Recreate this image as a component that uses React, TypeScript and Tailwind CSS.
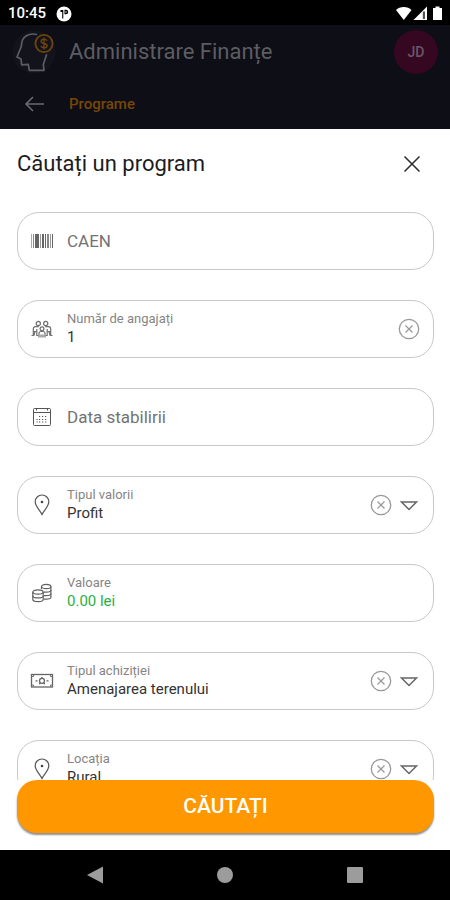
import { useState, type ReactNode } from "react";

function BarcodeIcon() {
  return (
    <svg width="24" height="16" viewBox="0 0 24 16" fill="#666" aria-hidden="true">
      <rect x="1" y="1" width="1" height="14" fill="#aaa" />
      <rect x="3" y="1" width="1" height="14" fill="#888" />
      <rect x="5" y="1" width="4" height="14" />
      <rect x="10" y="1" width="1" height="14" fill="#999" />
      <rect x="12" y="1" width="2" height="14" />
      <rect x="15" y="1" width="1" height="14" />
      <rect x="17" y="1" width="2" height="14" fill="#888" />
      <rect x="20" y="1" width="1" height="14" fill="#999" />
      <rect x="22" y="1" width="1" height="14" />
    </svg>
  );
}

function PeopleIcon() {
  return (
    <svg width="24" height="20" viewBox="0 0 24 20" fill="none" stroke="#707070" strokeWidth="1.200" aria-hidden="true">
      <circle cx="8.300" cy="4.500" r="2.100" />
      <circle cx="15.700" cy="4.500" r="2.100" />
      <circle cx="12" cy="9.800" r="1.900" />
      <path d="M1.500 16.500h1.800V9.800c0-1.400.8-2.200 2.200-2.200h3.300M3.300 12.500h3.500V10M6.800 12.500v4h1.500M5 12.500l-1 4" />
      <path d="M22.500 16.500h-1.800V9.800c0-1.400-.8-2.200-2.200-2.200h-3.300M20.700 12.500h-3.500V10M17.200 12.500v4h-1.500M19 12.500l1 4" />
      <path d="M9 18.500v-4c0-1.200.8-2 2-2h2c1.200 0 2 .8 2 2v4M11 15.500v3M13 15.500v3" />
    </svg>
  );
}

function CalendarIcon() {
  return (
    <svg width="20" height="20" viewBox="0 0 20 20" fill="none" stroke="#555" aria-hidden="true">
      <rect x="1.500" y="1.500" width="17" height="17" rx="1" />
      <path d="M1.500 5.500h17M4.500 1v2.500M15.500 1v2.500" />
      <path d="M7 9.500h1.200M10 9.500h1.200M13 9.500h1.200M4.500 12.500h1.200M7 12.500h1.200M10 12.500h1.200M13 12.500h1.200M4.500 15h1.200M7 15h1.200M10 15h1.200M13 15h1.200" />
    </svg>
  );
}

function PinIcon() {
  return (
    <svg width="16" height="22" viewBox="0 0 16 22" fill="none" stroke="#555" strokeWidth="1.200" aria-hidden="true">
      <path d="M8 20.500C6.500 17 1.200 12.500 1.200 7.800a6.800 6.800 0 0 1 13.600 0C14.800 12.500 9.500 17 8 20.500z" />
      <circle cx="8" cy="8" r="1.300" fill="#444" stroke="none" />
    </svg>
  );
}

function CoinsIcon() {
  return (
    <svg width="20" height="20" viewBox="0 0 20 20" fill="none" stroke="#606060" strokeWidth="1.200" aria-hidden="true">
      <path d="M9.500 6V3.500c0-1.200 2-2.200 4.700-2.200s4.700 1 4.700 2.200V14c0 1.200-2 2.200-4.700 2.200H12" />
      <path d="M9.500 3.500c0 1.200 2 2.200 4.700 2.200s4.700-1 4.700-2.200M18.900 7c0 1.200-2 2.200-4.700 2.200H12M18.900 10.500c0 1.200-2 2.200-4.700 2.200H12" />
      <path d="M.8 9c0-1.200 2-2.200 5.200-2.200s5.200 1 5.200 2.200v7.500c0 1.200-2 2.200-5.200 2.200s-5.200-1-5.200-2.200z" />
      <path d="M.8 9c0 1.200 2 2.200 5.200 2.200s5.200-1 5.200-2.200M.8 12.700c0 1.200 2 2.200 5.200 2.200s5.200-1 5.200-2.200" />
    </svg>
  );
}

function BanknoteIcon() {
  return (
    <svg width="24" height="16" viewBox="0 0 24 16" fill="none" stroke="#666" strokeWidth="1.300" aria-hidden="true">
      <rect x="1.500" y="1.500" width="21" height="12.500" />
      <path d="M3.500 2v1.500H2M20.500 2v1.500H22M3.500 13.500V12H2M20.500 13.500V12H22" strokeWidth="0.900" />
      <circle cx="12" cy="7.800" r="2.500" />
      <path d="M12 4v1.200M9 10.500h1.500M13.500 10.500H15M5.500 7.800h2M16.500 7.800h2" />
    </svg>
  );
}

function LogoIcon() {
  return (
    <svg width="44" height="44" viewBox="0 0 44 44" fill="none" aria-hidden="true">
      <circle cx="22" cy="22" r="21.500" fill="#13141b" />
      <path
        d="M25 4.500C16.500 2.500 10.500 7 9.700 13c0 2-.3 3.500-1 5L5 27l4 2 .7 5.800 6.600-.4 1 6H32l-.7-6 3.400-10.100"
        stroke="#5c5d63"
        strokeWidth="1.700"
        strokeLinejoin="round"
      />
      <circle cx="32" cy="13.500" r="8.600" stroke="#6e430b" strokeWidth="1.800" />
      <path
        d="M35 10.800c-.5-1-1.600-1.500-3-1.500-1.700 0-2.900.8-2.900 2.100 0 3 6 1.200 6 4.300 0 1.300-1.200 2.100-3 2.100-1.600 0-2.800-.6-3.200-1.800M32 7.500v12"
        stroke="#6e430b"
        strokeWidth="1.400"
      />
    </svg>
  );
}

function ClearButton({ name, onClear }: { name: string; onClear: () => void }) {
  return (
    <button type="button" aria-label={`Șterge ${name}`} onClick={onClear} className="shrink-0">
      <svg width="22" height="22" viewBox="0 0 22 22" fill="none" stroke="#999" aria-hidden="true">
        <circle cx="11" cy="11" r="9.700" strokeWidth="1.300" />
        <path d="M7.500 7.500l7 7M14.500 7.500l-7 7" strokeWidth="1.200" />
      </svg>
    </button>
  );
}

function Field({ icon, children }: { icon: ReactNode; children: ReactNode }) {
  return (
    <div className="flex h-[58px] shrink-0 items-center rounded-[22px] border border-[#c8c8c8] pr-[13px] pl-3">
      <div className="mr-[13px] flex w-6 shrink-0 justify-center">{icon}</div>
      {children}
    </div>
  );
}

const labelClass = "block text-[13px] leading-4 text-[#858585]";
const valueClass = "block w-full appearance-none bg-transparent text-[15px] leading-5 outline-none";

function EmptyField({ id, label, icon }: { id: string; label: string; icon: ReactNode }) {
  return (
    <Field icon={icon}>
      <input
        id={id}
        type="text"
        aria-label={label}
        placeholder={label}
        className="h-full min-w-0 flex-1 bg-transparent text-[17px] outline-none placeholder:text-[#737373]"
      />
    </Field>
  );
}

type TextFieldProps = { id: string; label: string; icon: ReactNode; initial: string; money?: boolean };

function TextField({ id, label, icon, initial, money }: TextFieldProps) {
  const [value, setValue] = useState(initial);
  return (
    <Field icon={icon}>
      <div className="min-w-0 flex-1">
        <label htmlFor={id} className={labelClass}>{label}</label>
        <input
          id={id}
          type="text"
          value={value}
          onChange={(e) => setValue(e.target.value)}
          className={`${valueClass} ${money ? "text-[#27b13f]" : "text-[#333]"}`}
        />
      </div>
      {!money && <ClearButton name={label} onClear={() => setValue("")} />}
    </Field>
  );
}

function SelectField({ id, label, icon, initial }: TextFieldProps) {
  const [value, setValue] = useState(initial);
  return (
    <Field icon={icon}>
      <div className="min-w-0 flex-1">
        <label htmlFor={id} className={labelClass}>{label}</label>
        <select
          id={id}
          value={value}
          onChange={(e) => setValue(e.target.value)}
          className={`${valueClass} text-[#333]`}
        >
          <option value="" />
          <option value={initial}>{initial}</option>
        </select>
      </div>
      <ClearButton name={label} onClear={() => setValue("")} />
      <svg className="ml-1.5 shrink-0" width="22" height="12" viewBox="0 0 22 12" fill="none" aria-hidden="true">
        <path d="M3.500 3h15L11 10.500z" stroke="#666" strokeWidth="1.500" />
      </svg>
    </Field>
  );
}

export default function App() {
  return (
    <div className="flex h-screen flex-col bg-black font-['Roboto','Noto_Sans',sans-serif]">
      <div className="flex h-[25px] shrink-0 items-center bg-black px-2 pt-0.5 text-white">
        <span className="text-[15px] font-medium">10:45</span>
        <svg className="ml-2.5" width="16" height="16" viewBox="0 0 16 16" aria-hidden="true">
          <circle cx="8" cy="8" r="7.500" fill="#fff" />
          <path d="M4.500 4h2.800v8.500H6.200V6H4.500zM8.500 3.800h1.500a2.200 2.200 0 0 1 0 4.400H8.500z" fill="#000" />
          <path d="M9.500 5.200h1v1.500h-1z" fill="#fff" />
        </svg>
        <svg className="ml-auto" width="48" height="16" viewBox="0 0 48 16" fill="#fff" aria-hidden="true">
          <path d="M2 4C5.500 0 14 0 17.500 4L9.800 14z" />
          <path d="M33 .5V14H19.500z" />
          <path d="M28.800 5.500h2.200V13h-2.200z" fill="#555" />
          <path d="M41.500.5h4V2h2.500v12h-9V2h2.500z" />
        </svg>
      </div>

      <header className="shrink-0 bg-[#0d0e16]">
        <div className="flex h-[54px] items-center px-3">
          <LogoIcon />
          <h1 className="ml-[13px] flex-1 text-[22px] leading-8 text-[#5c5d62]">Administrare Finanțe</h1>
          <div className="flex size-11 items-center justify-center rounded-full bg-[#350720] text-sm font-medium text-[#69586a]">
            JD
          </div>
        </div>
        <nav className="flex h-[50px] items-center pl-6">
          <button type="button" aria-label="Înapoi" className="mr-6">
            <svg width="21" height="16" viewBox="0 0 21 16" fill="none" stroke="#6a6b70" strokeWidth="1.600" aria-hidden="true">
              <path d="M20 8H2.500M9 1L2 8l7 7" />
            </svg>
          </button>
          <a href="#programe" className="text-[15px] font-medium text-[#784707]">Programe</a>
        </nav>
      </header>

      <main className="flex min-h-0 flex-1 flex-col bg-white pr-4 pl-[17px]">
        <div className="flex h-[83px] shrink-0 items-center justify-between pb-[14px]">
          <h2 className="text-[22px] leading-[34px] text-[#1c1c1c]">Căutați un program</h2>
          <button type="button" aria-label="Închide" className="mr-2 p-1">
            <svg width="20" height="20" viewBox="0 0 20 20" fill="none" stroke="#2b2b2b" strokeWidth="1.500" aria-hidden="true">
              <path d="M2.500 2.500l15 15M17.500 2.500l-15 15" />
            </svg>
          </button>
        </div>
        <form className="flex min-h-0 flex-1 flex-col">
          <div className="flex min-h-0 flex-1 flex-col gap-[30px] overflow-y-auto [scrollbar-width:none]">
            <EmptyField id="caen" label="CAEN" icon={<BarcodeIcon />} />
            <TextField id="angajati" label="Număr de angajați" icon={<PeopleIcon />} initial="1" />
            <EmptyField id="data" label="Data stabilirii" icon={<CalendarIcon />} />
            <SelectField id="tip-valoare" label="Tipul valorii" icon={<PinIcon />} initial="Profit" />
            <TextField id="valoare" label="Valoare" icon={<CoinsIcon />} initial="0.00 lei" money />
            <SelectField id="tip-achizitie" label="Tipul achiziției" icon={<BanknoteIcon />} initial="Amenajarea terenului" />
            <SelectField id="locatia" label="Locația" icon={<PinIcon />} initial="Rural" />
          </div>
          <button
            type="button"
            className="mb-[17px] h-[53px] shrink-0 rounded-[20px] bg-[#ff9800] text-[21px] font-medium text-white shadow-[0_2px_2px_rgba(0,0,0,0.45)]"
          >
            CĂUTAȚI
          </button>
        </form>
      </main>

      <nav className="flex h-[50px] shrink-0 items-center justify-around bg-black px-[30px]">
        <button type="button" aria-label="Înapoi la ecranul anterior">
          <svg width="18" height="18" viewBox="0 0 18 18" fill="#9c9c9c" aria-hidden="true">
            <path d="M17 .5v17L1 9z" />
          </svg>
        </button>
        <button type="button" aria-label="Ecran principal">
          <svg width="18" height="18" viewBox="0 0 18 18" fill="#9c9c9c" aria-hidden="true">
            <circle cx="9" cy="9" r="8" />
          </svg>
        </button>
        <button type="button" aria-label="Aplicații recente">
          <svg width="18" height="18" viewBox="0 0 18 18" fill="#9c9c9c" aria-hidden="true">
            <rect x="1" y="1" width="16" height="16" rx="1" />
          </svg>
        </button>
      </nav>
    </div>
  );
}
